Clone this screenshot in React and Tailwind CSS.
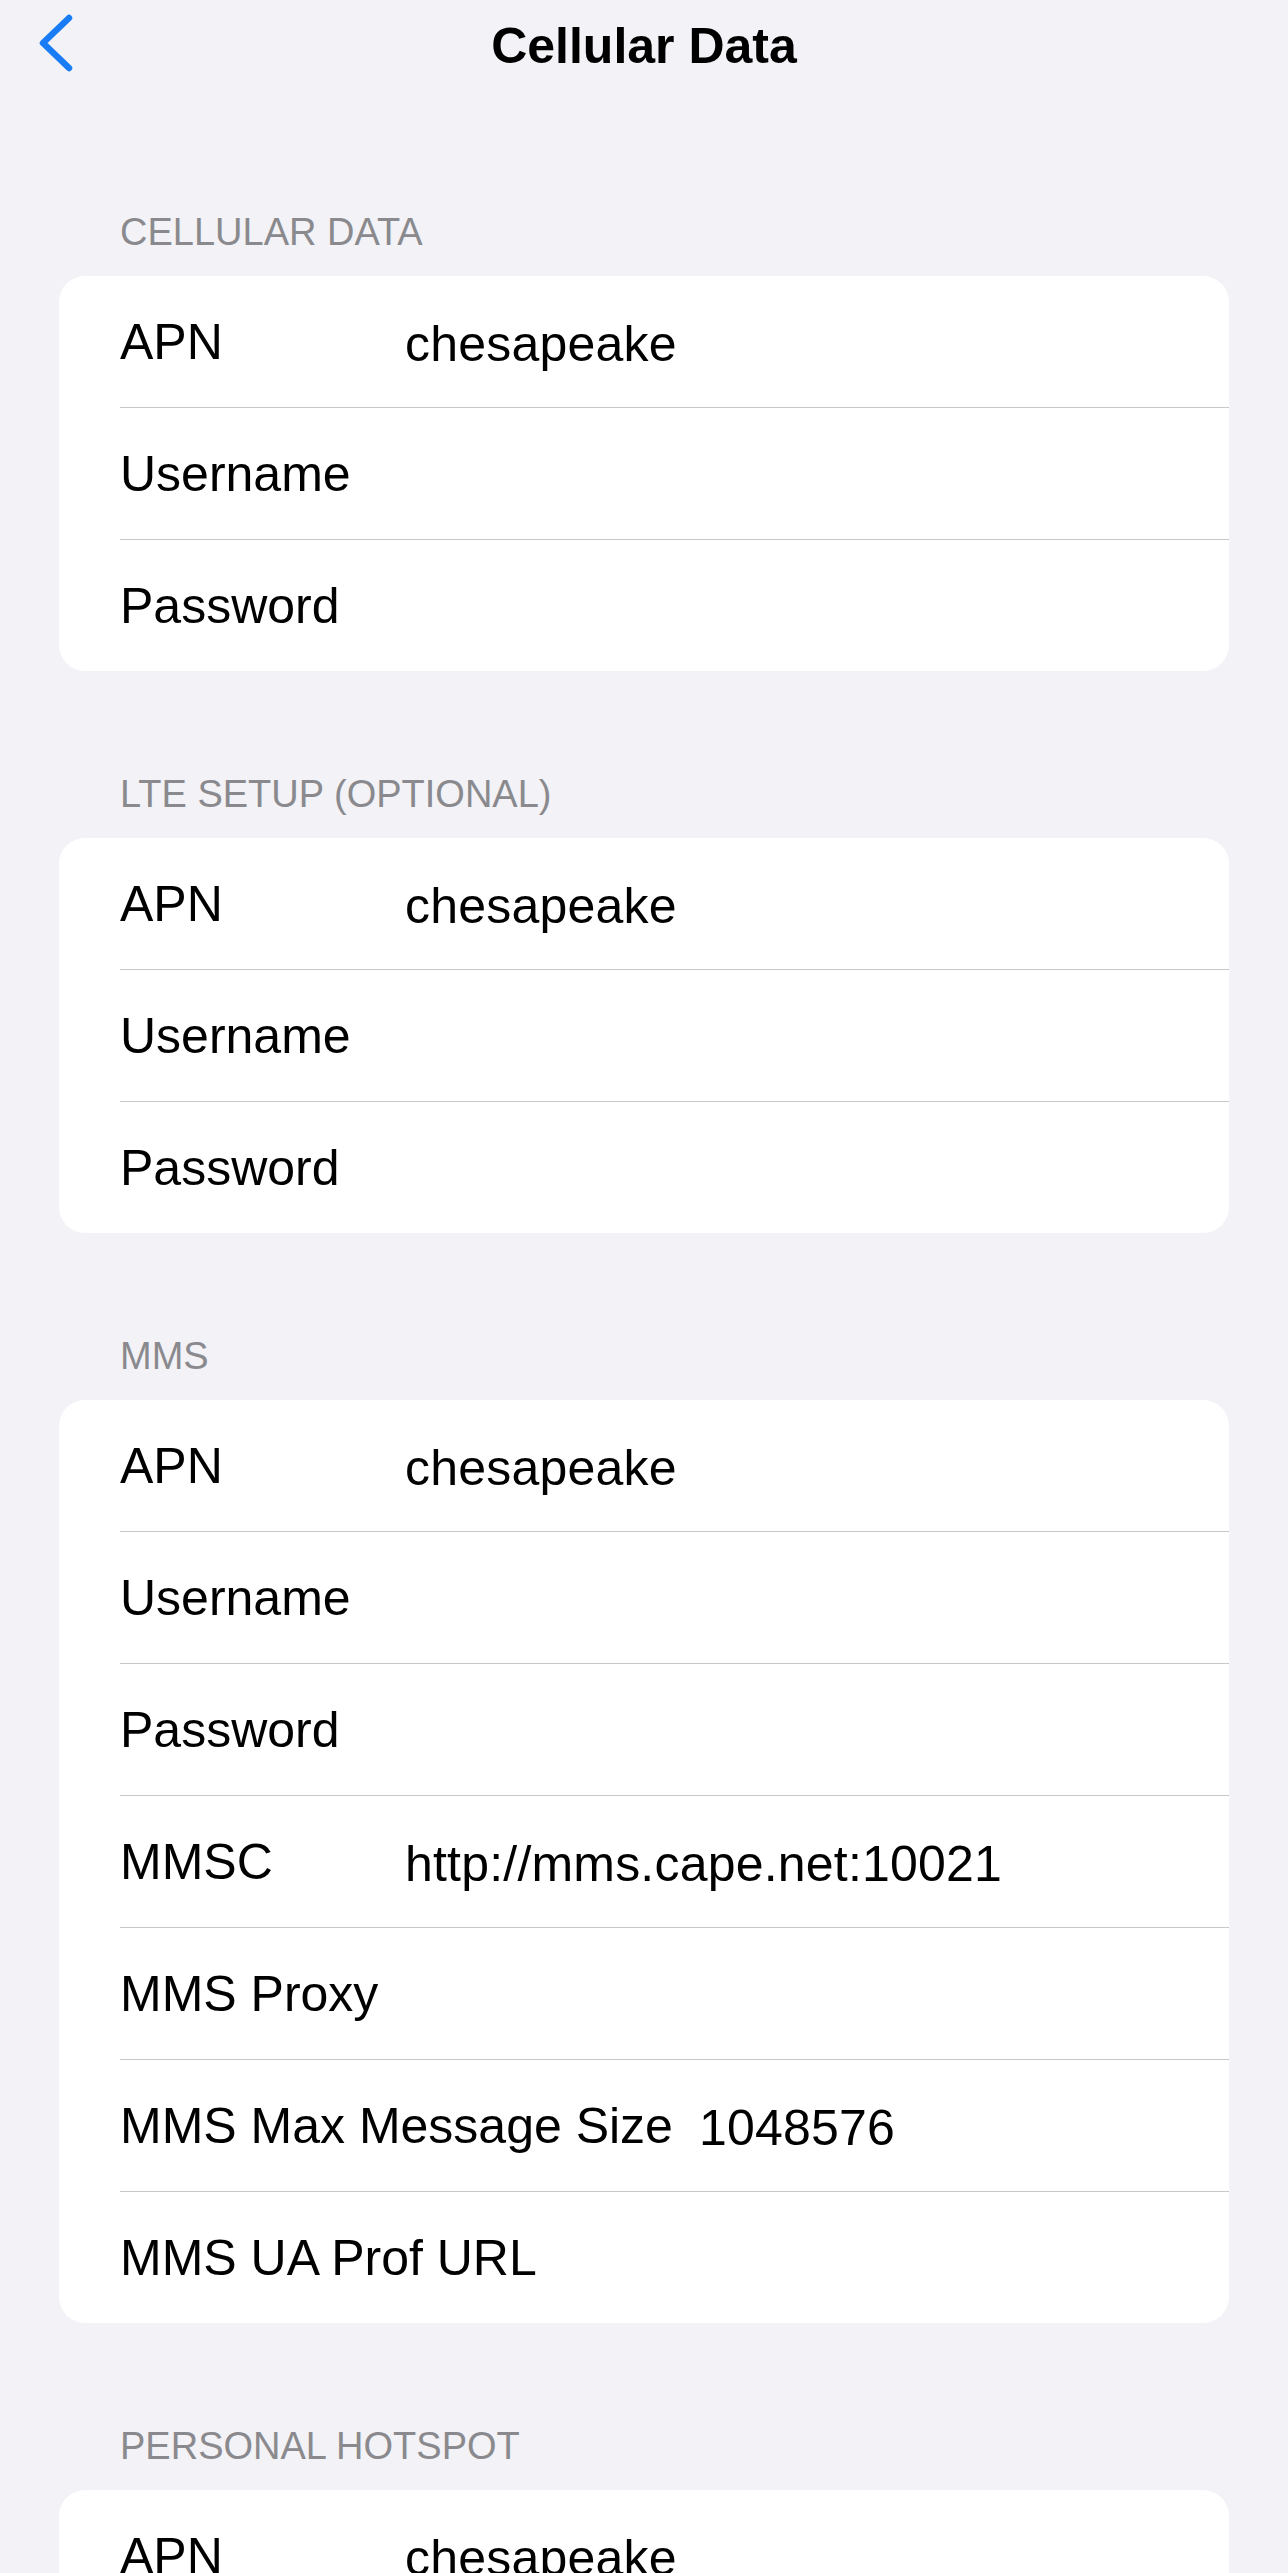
import React from "react";

const sections = [
  {
    title: "CELLULAR DATA",
    rows: [
      ["APN", "chesapeake"],
      ["Username", ""],
      ["Password", ""],
    ],
  },
  {
    title: "LTE SETUP (OPTIONAL)",
    rows: [
      ["APN", "chesapeake"],
      ["Username", ""],
      ["Password", ""],
    ],
  },
  {
    title: "MMS",
    rows: [
      ["APN", "chesapeake"],
      ["Username", ""],
      ["Password", ""],
      ["MMSC", "http://mms.cape.net:10021"],
      ["MMS Proxy", ""],
      ["MMS Max Message Size", "1048576"],
      ["MMS UA Prof URL", ""],
    ],
  },
  {
    title: "PERSONAL HOTSPOT",
    rows: [
      ["APN", "chesapeake"],
      ["Username", ""],
      ["Password", ""],
    ],
  },
];

function Row({ label, value }) {
  return (
    <div className="flex h-[131px] items-center pl-[61px] pr-[40px]">
      <span className="min-w-[259px] shrink-0 whitespace-nowrap text-[50px] leading-none text-black">
        {label}
      </span>
      {value ? (
        <span className="ml-[26px] whitespace-nowrap pt-[5px] text-[50px] leading-none tracking-[0.2px] text-black">
          {value}
        </span>
      ) : null}
    </div>
  );
}

function Section({ title, rows }) {
  return (
    <section className="mb-[100px]">
      <div className="pb-[21px] pl-[120px] text-[38px] leading-[46px] text-[#8a8a8e]">
        {title}
      </div>
      <div className="mx-[59px] overflow-hidden rounded-[26px] bg-white">
        {rows.map(([label, value], i) => (
          <React.Fragment key={i}>
            {i > 0 && <div className="ml-[61px] h-px bg-[#c8c8cc]" />}
            <Row label={label} value={value} />
          </React.Fragment>
        ))}
      </div>
    </section>
  );
}

export default function App() {
  return (
    <div
      className="h-[2573px] w-full overflow-hidden bg-[#f2f2f7]"
      style={{ fontFamily: '"Liberation Sans", Arial, sans-serif' }}
    >
      <header className="grid h-[88px] grid-cols-[1fr_auto_1fr] items-start">
        <div className="pl-[36px] pt-[11px]">
          <svg width="40" height="64" viewBox="0 0 40 64" fill="none">
            <path
              d="M33 7 L7 32 L33 57"
              stroke="#1a7cf5"
              strokeWidth="6.5"
              strokeLinecap="round"
              strokeLinejoin="round"
            />
          </svg>
        </div>
        <h1 className="pt-[21px] text-[50px] font-bold leading-[50px] text-black">
          Cellular Data
        </h1>
        <div />
      </header>
      <main className="pt-[121px]">
        {sections.map((s, i) => (
          <Section key={i} title={s.title} rows={s.rows} />
        ))}
      </main>
    </div>
  );
}
